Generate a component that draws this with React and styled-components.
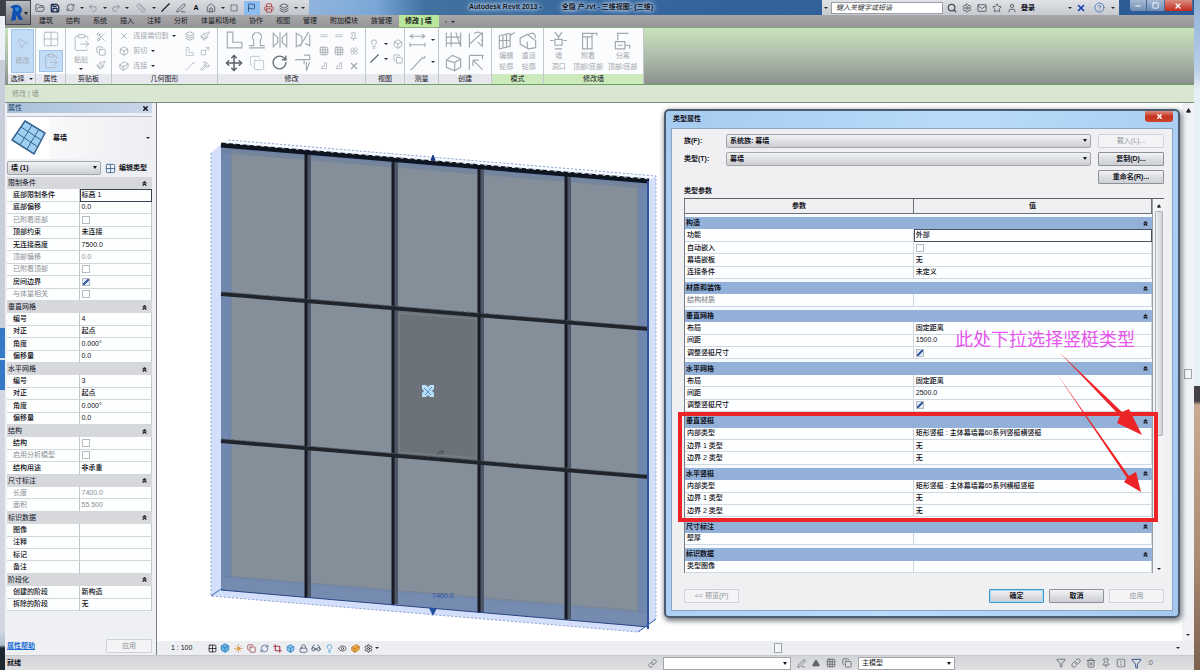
import React, { useState } from "react";
import styled, { createGlobalStyle } from "styled-components";
import {
  FolderOpen, Save, RefreshCw, Undo2, Redo2, Slash, Square, Home, Flag, Printer,
  Search, Star, User, CircleHelp, MousePointer2, Scissors, Copy, Paintbrush,
  ClipboardPaste, Move, RotateCw, Lightbulb, Box, Ruler, Grid2x2, Grid3x3,
  PenLine, Hammer, Pin, Trash2, FlipHorizontal, Sun, Crop, Glasses, Eye, Lock,
  Funnel, Link, Mail, Layers, ChevronsUp, Triangle, Minus, Settings, X, Cuboid,
} from "lucide-react";

const GlobalStyle = createGlobalStyle`
  html {
    font-size: 16px;
  }

  body {
    margin: 0;
    padding: 0;
    background: #d5dae6;
  }

  * {
    box-sizing: border-box;
  }

  body, button, input, select {
    font-family: "Liberation Sans", "Noto Sans CJK SC", sans-serif;
    font-size: 7px;
    line-height: 10px;
    color: #14141c;
  }

  button {
    padding: 0;
    margin: 0;
    border: 0;
    background: none;
  }

  svg {
    display: block;
    flex: none;
  }
`

const Desktop = styled.div`
  display: grid;
  grid-template-columns: 5px minmax(0, 1fr) 6px;
  min-height: 100vh;
`

const LeftEdge = styled.div`
  background: linear-gradient(
    #3e4048 0 16px, #eef2f8 16px 60px, #c9cedb 60px 328px, #3478c8 328px 358px,
    #d6def0 358px 360px, #3478c8 360px 390px, #d2d7e2 390px 630px, #aebfd0 645px, #1c2731 648px
  );
`

const RightEdge = styled.div`
  background: linear-gradient(
    #8fb0d6 0, #b9cfe9 70px, #e6f0f7 90px 386px, #444248 386px 401px, #c8ab92 405px, #a98a72 560px, #7d6250
  );
`

const Window = styled.div`
  display: flex;
  flex-direction: column;
  min-width: 0;
`

const TitleBar = styled.header`
  display: flex;
  height: 15px;
  background: linear-gradient(90deg, #90b5dd 305px, #7aa7d6 370px, #41719f 420px, #34629c 60%, #2c5a94);
`

const AppButton = styled.button`
  position: relative;
  z-index: 2;
  display: flex;
  align-items: center;
  width: 26px;
  height: 25px;
  padding: 2px;
  background: linear-gradient(#b9bcc2, #77797e);
  border: 1px solid #44464c;
`

const QuickAccess = styled.div`
  display: flex;
  align-items: center;
  justify-content: space-between;
  width: 278px;
  padding: 0 4px 0 3px;
  background: linear-gradient(#d9dbe0, #c3c6cc);
  color: #4c505a;
`

const IconButton = styled.button`
  display: flex;
  align-items: center;
  justify-content: center;
  min-width: ${(props) => props.$w || 12}px;
  height: ${(props) => props.$h || 12}px;
  color: ${(props) => props.$color || "inherit"};
  background: ${(props) => (props.$on ? "#8cbcf0" : "transparent")};
`

const Caret = styled.span`
  width: 0;
  height: 0;
  border: 2px solid transparent;
  border-top-color: ${(props) => props.$color || "#26282e"};
  border-bottom-width: 0;
`

const Caption = styled.h1`
  flex: 1;
  display: flex;
  gap: 20px;
  margin: 0;
  padding-left: 160px;
  font-size: 7px;
  line-height: 14px;
  font-weight: 700;
  white-space: nowrap;
  text-shadow: 0 0 3px #cfe2f7, 0 0 5px #b3cfee, 0 0 6px #b3cfee;
`

const InfoBar = styled.div`
  display: flex;
  align-items: center;
  gap: 3px;
  width: 297px;
  padding: 0 4px 0 2px;
  background: linear-gradient(#e0e2e6, #c6c9cf);
  color: #4c505a;
`

const SearchBox = styled.input`
  width: 112px;
  height: 12px;
  padding: 0 4px;
  border: 1px solid #9a9ea6;
  background: #fff;
  &::placeholder {
    color: #333;
    font-style: italic;
  }
`

const Login = styled.button`
  font-weight: 700;
  margin-right: auto;
`

const WindowButtons = styled.div`
  display: flex;
  width: 63px;
  height: 11px;
  margin: 0 1px 0 11px;
  border-radius: 0 0 3px 3px;
  overflow: hidden;
`

const WindowButton = styled.button`
  flex: ${(props) => (props.$close ? 5 : 3)};
  display: flex;
  align-items: center;
  justify-content: center;
  color: #fff;
  background: ${(props) => (props.$close ? "linear-gradient(#d98c80, #c32a1c)" : "linear-gradient(#a5b9d3, #6d8db4)")};
  border-right: 1px solid #4a6890;
`

const Tabs = styled.nav`
  display: flex;
  align-items: flex-end;
  height: 13px;
  padding-left: 28px;
  background: linear-gradient(#a8a8aa, #969698);
  border-bottom: 1px solid #8aa884;
`

const Tab = styled.button`
  height: 12px;
  padding: 0 7px 0 6px;
  font-weight: ${(props) => (props.$active ? 700 : 400)};
  color: #16161a;
  background: ${(props) => (props.$active ? "#b9e59c" : "transparent")};
  white-space: nowrap;
`

const Ribbon = styled.div`
  display: flex;
  height: 57px;
  padding-left: 3px;
  background: linear-gradient(#c9e2bb, #b0c2ae 45%, #8b908c);
  border-bottom: 1px solid #6f9c68;
`

const Panel = styled.section`
  display: flex;
  flex-direction: column;
  width: ${(props) => props.$w}px;
  background: #fbfcfd;
  border-right: 1px solid #c3c6cc;
`

const PanelBody = styled.div`
  flex: 1;
  display: flex;
  align-items: center;
  justify-content: space-around;
  padding: 1px 3px;
  color: #a3a7af;
`

const PanelName = styled.h2`
  display: flex;
  align-items: center;
  justify-content: center;
  gap: 4px;
  height: 10px;
  margin: 0;
  font-size: 7px;
  font-weight: 400;
  background: ${(props) => (props.$green ? "#cdeabd" : "#e6e8ee")};
`

const IconGrid = styled.div`
  display: grid;
  grid-template-columns: repeat(${(props) => props.$cols}, auto);
  gap: ${(props) => props.$gap || 3}px;
  align-items: center;
  justify-items: center;
`

const Tool = styled.button`
  display: flex;
  flex-direction: column;
  align-items: center;
  justify-content: center;
  gap: ${(props) => props.$gap || 1}px;
  min-width: ${(props) => props.$w || 10}px;
  height: ${(props) => props.$h || "auto"};
  color: ${(props) => props.$color || "#a3a7af"};
  background: ${(props) => (props.$on ? "#c2dcf8" : "transparent")};
  border: ${(props) => (props.$on ? "1px solid #9fc4ea" : "0")};
  white-space: nowrap;
`

const ToolRow = styled.div`
  display: flex;
  align-items: center;
  gap: 4px;
  height: 14px;
`

const ToolColumn = styled.div`
  display: flex;
  flex-direction: column;
  gap: 1px;
`

const OptionsBar = styled.div`
  height: 18px;
  padding: 4px 7px;
  background: #d9e6d2;
  border-bottom: 1px solid #7d8a7c;
  color: #8d978b;
`

const Workspace = styled.main`
  flex: 1;
  display: flex;
  position: relative;
`

const Properties = styled.aside`
  display: flex;
  flex-direction: column;
  width: 152px;
  padding: 0 4px 2px 2px;
  background: #eef0f4;
  border-right: 1px solid #777b84;
`

const PaletteTitle = styled.h2`
  display: flex;
  align-items: center;
  justify-content: space-between;
  height: 10px;
  margin: 0;
  padding: 0 3px 0 1px;
  font-size: 7px;
  font-weight: 400;
  color: #23405f;
  background: linear-gradient(90deg, #a9c1da, #c9d7e8);
`

const TypePicker = styled.button`
  display: flex;
  align-items: center;
  gap: 4px;
  height: 43px;
  margin-top: 3px;
  padding-right: 2px;
  background: linear-gradient(90deg, #fdfdfe, #edeef1);
  border-top: 1px solid #b9bdc5;
  font-weight: 700;
`

const Thumb = styled.span`
  padding: 2px 3px;
  background: #fff;
`

const TypeLabel = styled.span`
  flex: 1;
  text-align: left;
`

const FilterRow = styled.div`
  display: flex;
  align-items: center;
  gap: 4px;
  height: 18px;
`

const SelectWrap = styled.div`
  position: relative;
  width: ${(props) => (props.$w ? props.$w + "px" : "auto")};
  &::after {
    content: "";
    position: absolute;
    right: 4px;
    top: 5px;
    border: 2px solid transparent;
    border-top: 3px solid #15161c;
    border-bottom-width: 0;
    pointer-events: none;
  }
`

const Select = styled.select`
  display: block;
  appearance: none;
  width: 100%;
  height: ${(props) => props.$h || 14}px;
  padding: 0 3px;
  font-weight: ${(props) => (props.$plain ? 400 : 700)};
  border: 1px solid #a2a5ac;
  border-radius: ${(props) => (props.$plain ? 0 : 2)}px;
  background: ${(props) => (props.$plain ? "#fff" : "linear-gradient(#f2f3f4, #dfe0e3 50%, #cdced2)")};
`

const EditType = styled.button`
  display: flex;
  align-items: center;
  gap: 3px;
  font-weight: 700;
`

const PropTable = styled.table`
  width: 100%;
  height: 434px;
  border-collapse: separate;
  border-spacing: 0;
  table-layout: fixed;
`

const PropGroup = styled.th`
  height: 12px;
  padding: 0 4px 0 1px;
  text-align: left;
  font-weight: 400;
  background: #d6d8dc;
`

const GroupLine = styled.div`
  display: flex;
  align-items: center;
  justify-content: space-between;
  color: #10131c;
`

const PropCell = styled.td`
  height: 12px;
  padding: 0 1px ${(props) => (props.$name ? "0 6px" : "0 2px")};
  font-weight: ${(props) => (props.$dim ? 400 : 500)};
  color: ${(props) => (props.$dim ? "#8c8f96" : "#0e0e16")};
  background: #fdfefe;
  border-right: 1px solid #c3c6cc;
  border-bottom: 1px solid #d3d6da;
  outline: ${(props) => (props.$focus ? "1px solid #3e4250" : "none")};
  outline-offset: -1px;
`

const Check = styled.input`
  display: block;
  appearance: none;
  width: 8px;
  height: 8px;
  margin: 0;
  border: 1px solid #b5b9c2;
  background: ${(props) => (props.defaultChecked ? "linear-gradient(135deg, #dfe9f7 35%, #3c5f9e 40% 60%, #dfe9f7 65%)" : "#fff")};
`

const ApplyRow = styled.div`
  display: flex;
  align-items: center;
  justify-content: space-between;
  margin-top: auto;
`

const HelpLink = styled.a`
  color: #1f6fd0;
  font-weight: 700;
`

const PushButton = styled.button`
  width: ${(props) => props.$w || 55}px;
  height: 14px;
  border: 1px solid ${(props) => (props.$primary ? "#3f97d0" : props.disabled ? "#cfd2d6" : "#8d9097")};
  border-radius: 1px;
  font-weight: ${(props) => (props.disabled ? 400 : 700)};
  color: ${(props) => (props.disabled ? "#8f9298" : "#14141c")};
  background: ${(props) => (props.disabled ? "#f4f4f6" : "linear-gradient(#f3f4f5, #dcdee2 50%, #cccfd5)")};
  box-shadow: ${(props) => (props.$primary ? "inset 0 0 0 1px #a6dbf5" : "none")};
`

const View = styled.section`
  flex: 1;
  display: flex;
  flex-direction: column;
  min-width: 0;
  background: #fff;
`

const Canvas = styled.div`
  flex: 1;
  display: flex;
  justify-content: space-between;
  padding-left: 48px;
`

const Drawing = styled.div`
  padding-top: 28px;
`

const ViewScroll = styled.div`
  display: flex;
  flex-direction: column;
  align-items: center;
  justify-content: space-between;
  width: 12px;
  padding: 5px 0;
  background: #f0f2f6;
`

const Grip = styled.span`
  width: 8px;
  height: 10px;
  border: 1px solid #9fa3ab;
  background: #f5f6f8;
`

const ViewBar = styled.div`
  display: flex;
  align-items: center;
  gap: 1px;
  height: 14px;
  padding: 0 14px;
  background: #eceef1;
`

const Scale = styled.button`
  width: 34px;
  text-align: left;
`

const ViewTrack = styled.div`
  flex: 1;
  display: flex;
  align-items: center;
  justify-content: center;
`

const StatusBar = styled.footer`
  display: flex;
  align-items: center;
  gap: 6px;
  height: 15px;
  padding: 0 41px 0 2px;
  background: linear-gradient(#d3d5d8, #dfe0e2);
  border-top: 1px solid #c6c8cc;
  color: #62656c;
`

const Ready = styled.span`
  flex: 1;
  font-weight: 700;
  color: #15161c;
`

const StatusRight = styled.div`
  flex: 1;
  display: flex;
  justify-content: flex-end;
  gap: 5px;
  max-width: 192px;
`

// floating window, lies over the drawing area
const Dialog = styled.div`
  position: absolute;
  left: 659px;
  right: 14px;
  top: 6px;
  display: flex;
  flex-direction: column;
  padding: 0 5px 5px;
  background: linear-gradient(100deg, #a7cbf0, #b9dcfb 50%, #a5c9ee);
  border: 2px solid #4a5b70;
  border-radius: 5px;
  box-shadow: 1px 2px 5px 1px rgba(30, 35, 50, 0.6);
`

const DialogTitle = styled.div`
  display: flex;
  justify-content: space-between;
  height: 17px;
  padding: 3px 0 0 2px;
  font-weight: 700;
`

const CloseButton = styled.button`
  display: flex;
  align-items: center;
  justify-content: center;
  width: 28px;
  height: 11px;
  margin-top: -3px;
  color: #fff;
  border-radius: 0 0 3px 3px;
  background: linear-gradient(#df8d7d, #c43420 50%, #d0442c);
`

const DialogBody = styled.div`
  padding: 5px 8px 7px 12px;
  background: #f0f0f3;
  border: 1px solid #8ba6c2;
`

const Form = styled.div`
  display: grid;
  grid-template-columns: 42px minmax(0, 1fr) 66px;
  column-gap: 0;
  row-gap: 4px;
  align-items: center;
  font-weight: 700;
`

const FormButton = styled(PushButton)`
  grid-column: 3;
  justify-self: end;
`

const FieldSelect = styled(SelectWrap)`
  margin-right: 7px;
`

const SubTitle = styled.div`
  margin: 2px 0;
  font-weight: 700;
`

const TableArea = styled.div`
  display: flex;
  border-top: 1px solid #5d6068;
`

const TypeTable = styled.table`
  flex: 1;
  height: 374px;
  border-collapse: separate;
  border-spacing: 0;
  table-layout: fixed;
  border-left: 1px solid #777b84;
  border-right: 1px solid #9a9ea6;
`

const HeadCell = styled.th`
  height: 15px;
  padding: 0;
  font-weight: 700;
  border-right: 1px solid #6c7078;
  border-bottom: 1px solid #6c7078;
`

const TypeGroup = styled.th`
  height: 15px;
  padding: 0 3px 0 1px;
  text-align: left;
  font-weight: 700;
  background: #93b1d8;
  background-clip: padding-box;
  border-top: 3px solid #f6f9fd;
`

const TypeCell = styled.td`
  height: 12px;
  padding: 0 2px;
  font-weight: 500;
  color: ${(props) => (props.$dim ? "#84878e" : "#0e0e16")};
  background: #fdfeff;
  border-right: 1px solid #d0d5dc;
  border-bottom: 1px solid #d0d8e0;
  outline: ${(props) => (props.$focus ? "1px solid #4c505c" : "none")};
  outline-offset: -1px;
`

const Scroll = styled.div`
  display: flex;
  flex-direction: column;
  align-items: center;
  gap: 3px;
  width: 11px;
  padding: 5px 0 3px;
  background: #f2f3f5;
`

const ScrollThumb = styled.div`
  width: 8px;
  height: 225px;
  border: 1px solid #b0b3ba;
  border-radius: 1px;
  background: linear-gradient(90deg, #f0f1f3, #cfd1d6);
`

const ScrollEnd = styled.button`
  margin-top: auto;
`

const Footer = styled.div`
  display: flex;
  gap: 5px;
  margin-top: 16px;
`

const Preview = styled(PushButton)`
  margin-right: auto;
`

const RedBox = styled.div`
  position: absolute;
  left: 12px;
  right: 20px;
  top: 301px;
  height: 110px;
  border: 4px solid #ec2427;
  pointer-events: none;
`

const Arrows = styled.svg`
  position: absolute;
  right: 33px;
  top: 238px;
  pointer-events: none;
`

const Note = styled.div`
  position: absolute;
  right: 43px;
  top: 217px;
  font-family: "Liberation Serif", "Noto Sans CJK SC", sans-serif;
  font-size: 18px;
  line-height: 24px;
  color: #e656ec;
  white-space: nowrap;
`

const tabs = ["建筑", "结构", "系统", "插入", "注释", "分析", "体量和场地", "协作", "视图", "管理", "附加模块", "族管理"]

// value true / false is a tick box, dim rows are read only
const properties = [
  { name: "限制条件", rows: [
    { label: "底部限制条件", value: "标高 1", focus: true },
    { label: "底部偏移", value: "0.0" },
    { label: "已附着底部", value: false, dim: true },
    { label: "顶部约束", value: "未连接" },
    { label: "无连接高度", value: "7500.0" },
    { label: "顶部偏移", value: "0.0", dim: true },
    { label: "已附着顶部", value: false, dim: true },
    { label: "房间边界", value: true },
    { label: "与体量相关", value: false, dim: true },
  ] },
  { name: "垂直网格", rows: [
    { label: "编号", value: "4" },
    { label: "对正", value: "起点" },
    { label: "角度", value: "0.000°" },
    { label: "偏移量", value: "0.0" },
  ] },
  { name: "水平网格", rows: [
    { label: "编号", value: "3" },
    { label: "对正", value: "起点" },
    { label: "角度", value: "0.000°" },
    { label: "偏移量", value: "0.0" },
  ] },
  { name: "结构", rows: [
    { label: "结构", value: false },
    { label: "启用分析模型", value: false, dim: true },
    { label: "结构用途", value: "非承重" },
  ] },
  { name: "尺寸标注", rows: [
    { label: "长度", value: "7400.0", dim: true },
    { label: "面积", value: "55.500", dim: true },
  ] },
  { name: "标识数据", rows: [
    { label: "图像", value: "" },
    { label: "注释", value: "" },
    { label: "标记", value: "" },
    { label: "备注", value: "" },
  ] },
  { name: "阶段化", rows: [
    { label: "创建的阶段", value: "新构造" },
    { label: "拆除的阶段", value: "无" },
  ] },
]

const typeParams = [
  { name: "构造", rows: [
    { label: "功能", value: "外部", focus: true },
    { label: "自动嵌入", value: false },
    { label: "幕墙嵌板", value: "无" },
    { label: "连接条件", value: "未定义" },
  ] },
  { name: "材质和装饰", rows: [{ label: "结构材质", value: "", dim: true }] },
  { name: "垂直网格", rows: [
    { label: "布局", value: "固定距离" },
    { label: "间距", value: "1500.0" },
    { label: "调整竖梃尺寸", value: true },
  ] },
  { name: "水平网格", rows: [
    { label: "布局", value: "固定距离" },
    { label: "间距", value: "2500.0" },
    { label: "调整竖梃尺寸", value: true },
  ] },
  { name: "垂直竖梃", rows: [
    { label: "内部类型", value: "矩形竖梃 : 主体幕墙幕60系列竖梃横竖梃" },
    { label: "边界 1 类型", value: "无" },
    { label: "边界 2 类型", value: "无" },
  ] },
  { name: "水平竖梃", rows: [
    { label: "内部类型", value: "矩形竖梃 : 主体幕墙幕65系列横梃竖梃" },
    { label: "边界 1 类型", value: "无" },
    { label: "边界 2 类型", value: "无" },
  ] },
  { name: "尺寸标注", rows: [{ label: "壁厚", value: "" }] },
  { name: "标识数据", rows: [{ label: "类型图像", value: "" }] },
]

const paths = {
  cope: "M2 1v14h13v-5H7V1z",
  cut: "M1 13h4V8a4 4 0 1 1 6 0v5h4M1 15h14",
  mirror: "M2 2v12l4-4V6zM14 2v12l-4-4V6zM8 1v14",
  mirrorDraw: "M2 2v12l5-3V5zM14 3v10l-4-2M5 14L13 1",
  trim: "M1 5h8v4M9 1h5v4H9M11 7v8M14 7l-3 8",
  offset: "M2 6h12M2 9h12",
  array: "M2 2h5v5H2zM9 2h5v5H9zM2 9h5v5H2zM9 9h5v5H9z",
  scale: "M2 14V7h7v7zM9 2h5v5M14 2L8 8",
  corner: "M3 12h9V3M5 12V8h4V3h3",
  dim: "M1 4h14M4 2L1 4l3 2M12 2l3 2-3 2M1 12h14M1 10v4M15 10v4",
  measure: "M3 14L13 3M13 3a1 1 0 1 0 1-1M3 14l-2 1",
  group: "M2 2v12M6 2v12M2 6h12M2 11h12M10 2l4 12M14 2v12",
  sheet: "M2 3v12M2 12L13 2M6 3a4 4 0 0 1 6 6M13 2v12M9 10l4 4",
  assembly: "M2 6l5-4 7 3v7l-5 3-7-3zM2 6l7 2 5-3M9 8v7",
  similar: "M2 2h12M2 2v12M5 6l8 8M5 6v5M5 6h5M13 2v3",
  profile: "M2 4l9-2v11l-9 2zM5 4v10M8 3v10M11 4l4-3M2 8h9",
  reset: "M1 6l6-3 7 5v6l-6 1-7-4zM8 3c4-3 6 0 6 3M7 9v6",
  opening: "M5 1l3 4 3-4M8 5v2M5 7h6v5H5zM1 8h3M12 8h3M5 15h6",
  attach: "M3 2h8v13H3zM3 5h8M11 2h4v2M7 5v10",
  detach: "M4 8V2h9M2 9h8v6H2zM10 12h4v3M4 12h4",
}

function Glyph({ name, size = 18, width = 1 }) {
  return (
    <svg width={size} height={size} viewBox="0 0 16 16" fill="none" stroke="currentColor" strokeWidth={width}>
      <path d={paths[name]} />
    </svg>
  )
}

function Logo() {
  return (
    <svg width="20" height="20" viewBox="0 0 20 20">
      <path d="M2 4Q8 0 12 3Q16 7 12 11L15 17L11 17L8 12L8 17L3 18L5 6Z" fill="#0f4fae" />
      <path d="M7 5Q12 3 11 7L8 9Z" fill="#3c84d4" />
      <path d="M16 9h4l-2 3z" fill="#222" />
    </svg>
  )
}

function CurtainIcon() {
  return (
    <svg width="36" height="38" viewBox="0 0 36 38" stroke="#35638f">
      <path d="M15 2L35 14L24 35L2 21Z" fill="#9fd0f2" strokeWidth="1.5" />
      <path d="M22 6L10 26M29 10L17 30M11 8L31 21M7 14L28 28" fill="none" strokeWidth="1" />
    </svg>
  )
}

function WallDrawing() {
  const mullions = [305, 392, 478, 565]
  // the wall drops 36px over its 428px width
  const drop = (x) => Math.round(((x - 221) * 36) / 428)
  return (
    <svg width="460" height="506" viewBox="205 130 460 506">
      <path d="M211 152L221 143L229 139L656 175V619L638 631L211 595Z" fill="#d3dffb" />
      <path d="M229 139L656 175L649 179L221 143Z" fill="#f6f9ff" />
      <path d="M211 152V595L638 631L656 618V175L229 139V146" fill="none" stroke="#8fa2cf" strokeDasharray="2 2" />
      <path d="M221 143L649 180V626L221 589Z" fill="#7088b0" />
      <path d="M231 149L638 183V611L231 576Z" fill="#848f9a" />
      <path d="M221 147L649 183V188L221 152Z" fill="#6b7f9f" opacity="0.6" />
      <path d="M221 577L649 613V626L221 589Z" fill="#768bb0" />
      <path d="M231 156V575M638 190V610M225 575L642 610" fill="none" stroke="#647899" strokeDasharray="1 1" />
      <path d="M396 308L480 315V461L396 454Z" fill="#6b727a" />
      <path d="M399 312L477 318V457L399 451Z" fill="none" stroke="#7d848c" />
      <path d="M437 454l3-4 4 1-4 2" fill="none" stroke="#4a5058" />
      {mullions.map((x) => (
        <g key={x}>
          <path d={`M${x + 4} ${145 + drop(x)}v444`} stroke="#4d5667" strokeWidth="4" />
          <path d={`M${x + 1} ${145 + drop(x)}v445`} stroke="#161a22" strokeWidth="3" />
        </g>
      ))}
      <path d="M221 144L649 180" stroke="#0f1421" strokeWidth="5" />
      <path d="M226 142L649 178" stroke="#e5ebf8" strokeDasharray="3 4" />
      <path d="M221 293L649 328M221 440L649 476" stroke="#20242b" strokeWidth="4" />
      <path d="M222 291L649 326M222 438L649 474" stroke="#4e555d" strokeDasharray="3 2" />
      <path d="M221 589L649 626" stroke="#2c4680" />
      <path d="M648 180V628" stroke="#32549c" strokeWidth="2" />
      <path d="M211 595l10-7 5 1M638 631l18-13" fill="none" stroke="#3f66b8" />
      <path d="M431 159l2-5 2 5z" fill="#183b86" stroke="#183b86" />
      <path d="M429 607h8l-4 8z" fill="#2450a0" />
      <path d="M422 384h4l2 2 2-2h4v4l-2 2 2 2v4h-4l-2-2-2 2h-4v-4l2-2-2-2z" fill="#b9e0fb" />
      <path d="M424 387l7 7M432 386l-7 8" stroke="#4d86b8" />
      <text x="432" y="597" fontSize="7" fill="#2e539c">7400.0</text>
    </svg>
  )
}

const toValue = (row) =>
  typeof row.value === "boolean" ? (
    <Check type="checkbox" aria-label={row.label} defaultChecked={row.value} disabled={row.dim} />
  ) : row.value

const GroupHead = ({ name, open, onToggle }) => (
  <GroupLine>
    {name}
    <button type="button" aria-label={`折叠 ${name}`} aria-expanded={open} onClick={onToggle}>
      <ChevronsUp size={7} strokeWidth={4} />
    </button>
  </GroupLine>
)

const App = () => {
  const [closed, setClosed] = useState([])
  const [active, setActive] = useState("修改 | 墙")

  const toggle = (key) =>
    setClosed(closed.includes(key) ? closed.filter((k) => k !== key) : [...closed, key])

  return (
    <>
      <GlobalStyle />
      <Desktop>
        <LeftEdge />
        <Window>
          <TitleBar>
            <AppButton aria-label="应用程序菜单"><Logo /></AppButton>
            <QuickAccess>
              <IconButton aria-label="打开"><FolderOpen size={10} /></IconButton>
              <IconButton aria-label="保存" $color="#1e2c50"><Save size={10} strokeWidth={3} /></IconButton>
              <IconButton aria-label="同步"><RefreshCw size={9} /></IconButton>
              <Caret />
              <IconButton aria-label="放弃" $color="#8b8f98"><Undo2 size={10} /></IconButton>
              <Caret />
              <IconButton aria-label="重做" $color="#8b8f98"><Redo2 size={10} /></IconButton>
              <Caret />
              <IconButton aria-label="测量" $w={16} $color="#8b8f98"><Ruler size={10} /></IconButton>
              <Caret />
              <IconButton aria-label="对齐" $color="#15161c"><Slash size={9} strokeWidth={3} /></IconButton>
              <IconButton aria-label="标记"><PenLine size={10} /></IconButton>
              <IconButton aria-label="文字" $color="#08080c"><b>A</b></IconButton>
              <IconButton aria-label="三维视图"><Home size={10} /></IconButton>
              <Caret />
              <IconButton aria-label="剖面"><Square size={8} /></IconButton>
              <IconButton aria-label="细线" $on $w={16} $h={14} $color="#1f3b70"><Flag size={9} /></IconButton>
              <IconButton aria-label="关闭窗口" $color="#b03a3a"><Printer size={10} /></IconButton>
              <IconButton aria-label="切换窗口"><Layers size={10} /></IconButton>
              <Caret />
              <Caret />
            </QuickAccess>
            <Caption>
              <span>Autodesk Revit 2013 -</span>
              <span>全隐 产.rvt - 三维视图: {"{三维}"}</span>
            </Caption>
            <InfoBar>
              <Caret />
              <SearchBox aria-label="搜索" placeholder="键入关键字或短语" />
              <IconButton aria-label="搜索"><Search size={10} strokeWidth={3} /></IconButton>
              <IconButton aria-label="速博"><Settings size={10} /></IconButton>
              <IconButton aria-label="通讯中心"><Mail size={10} /></IconButton>
              <IconButton aria-label="收藏夹"><Star size={10} /></IconButton>
              <IconButton aria-label="用户"><User size={10} /></IconButton>
              <Login>登录</Login>
              <Caret />
              <IconButton aria-label="Exchange" $color="#1c3fae"><X size={10} strokeWidth={4} /></IconButton>
              <IconButton aria-label="帮助" $w={18} $color="#4a7ab8"><CircleHelp size={11} /></IconButton>
              <Caret />
            </InfoBar>
            <WindowButtons>
              <WindowButton aria-label="最小化"><Minus size={8} strokeWidth={3} /></WindowButton>
              <WindowButton aria-label="最大化"><Square size={7} strokeWidth={3} /></WindowButton>
              <WindowButton aria-label="关闭" $close><X size={8} strokeWidth={4} /></WindowButton>
            </WindowButtons>
          </TitleBar>

          <Tabs>
            {[...tabs, "修改 | 墙"].map((name) => (
              <Tab key={name} $active={name === active} onClick={() => setActive(name)}>{name}</Tab>
            ))}
            <Tab aria-label="显示选项"><ToolRow>▫ <Caret /></ToolRow></Tab>
          </Tabs>

          <Ribbon>
            <Panel $w={28}>
              <PanelBody>
                <Tool $on $w={23} $h="44px" $gap={6}><MousePointer2 size={13} strokeWidth={1} />修改</Tool>
              </PanelBody>
              <PanelName>选择 <Caret /></PanelName>
            </Panel>
            <Panel $w={30}>
              <PanelBody>
                <IconGrid $cols={1} $gap={2}>
                  <Tool aria-label="类型属性"><Grid2x2 size={18} strokeWidth={1} /></Tool>
                  <Tool aria-label="属性" $on $w={24} $h="22px"><ClipboardPaste size={16} strokeWidth={1} /></Tool>
                </IconGrid>
              </PanelBody>
              <PanelName>属性</PanelName>
            </Panel>
            <Panel $w={46}>
              <PanelBody>
                <Tool $gap={3}><ClipboardPaste size={19} strokeWidth={1} />粘贴<Caret /></Tool>
                <IconGrid $cols={1} $gap={4}>
                  <Tool aria-label="剪切"><Scissors size={10} /></Tool>
                  <Tool aria-label="复制"><Copy size={10} /></Tool>
                  <Tool aria-label="匹配"><Paintbrush size={10} /></Tool>
                </IconGrid>
              </PanelBody>
              <PanelName>剪贴板</PanelName>
            </Panel>
            <Panel $w={106}>
              <PanelBody>
                <ToolColumn>
                  <ToolRow><X size={10} />连接端切割<Caret /></ToolRow>
                  <ToolRow><Box size={10} />剪切<Caret /></ToolRow>
                  <ToolRow><Cuboid size={10} />连接<Caret /></ToolRow>
                </ToolColumn>
                <IconGrid $cols={2} $gap={5}>
                  <Tool aria-label="拆分面"><Layers size={10} /></Tool>
                  <Tool aria-label="填色"><Paintbrush size={10} /></Tool>
                  <Tool aria-label="墙连接"><Glyph name="cope" size={9} /></Tool>
                  <Tool aria-label="梁柱连接"><Glyph name="scale" size={10} /></Tool>
                  <Tool aria-label="屋顶连接"><Glyph name="measure" size={10} /></Tool>
                  <Tool aria-label="拆除"><Hammer size={10} /></Tool>
                </IconGrid>
              </PanelBody>
              <PanelName>几何图形</PanelName>
            </Panel>
            <Panel $w={148}>
              <PanelBody>
                <IconGrid $cols={4} $gap={5}>
                  <Tool aria-label="对齐"><Glyph name="cope" /></Tool>
                  <Tool aria-label="偏移"><Glyph name="cut" /></Tool>
                  <Tool aria-label="镜像拾取轴"><Glyph name="mirror" /></Tool>
                  <Tool aria-label="镜像绘制轴"><Glyph name="mirrorDraw" /></Tool>
                  <Tool aria-label="移动" $color="#5b606b"><Move size={18} strokeWidth={2} /></Tool>
                  <Tool aria-label="复制图元"><Copy size={16} strokeWidth={1} /></Tool>
                  <Tool aria-label="旋转" $color="#686d78"><RotateCw size={17} strokeWidth={2} /></Tool>
                  <Tool aria-label="修剪延伸"><Glyph name="trim" /></Tool>
                </IconGrid>
                <IconGrid $cols={3} $gap={5}>
                  <Tool aria-label="拆分"><Glyph name="offset" size={10} /></Tool>
                  <Tool aria-label="间隙拆分"><Glyph name="offset" size={10} /></Tool>
                  <Tool aria-label="锁定"><Pin size={9} /></Tool>
                  <Tool aria-label="阵列"><Grid3x3 size={10} /></Tool>
                  <Tool aria-label="缩放"><Grid3x3 size={10} /></Tool>
                  <Tool aria-label="解锁"><Glyph name="array" size={8} /></Tool>
                  <Tool aria-label="修剪单个"><Glyph name="corner" size={10} /></Tool>
                  <Tool aria-label="修剪多个"><Glyph name="corner" size={10} /></Tool>
                  <Tool aria-label="删除"><X size={10} strokeWidth={3} /></Tool>
                </IconGrid>
              </PanelBody>
              <PanelName>修改</PanelName>
            </Panel>
            <Panel $w={39}>
              <PanelBody>
                <IconGrid $cols={3} $gap={5}>
                  <Lightbulb size={10} /><Caret /><Box size={10} />
                  <Slash size={9} strokeWidth={3} color="#5b606b" /><Caret /><Copy size={10} />
                </IconGrid>
              </PanelBody>
              <PanelName>视图</PanelName>
            </Panel>
            <Panel $w={34}>
              <PanelBody>
                <IconGrid $cols={2} $gap={5}>
                  <Glyph name="dim" size={17} /><Caret />
                  <Glyph name="measure" size={17} /><Caret />
                </IconGrid>
              </PanelBody>
              <PanelName>测量</PanelName>
            </Panel>
            <Panel $w={53}>
              <PanelBody>
                <IconGrid $cols={2} $gap={4}>
                  <Glyph name="group" size={19} />
                  <Glyph name="sheet" size={19} />
                  <Glyph name="assembly" size={19} />
                  <Glyph name="similar" size={19} />
                </IconGrid>
              </PanelBody>
              <PanelName>创建</PanelName>
            </Panel>
            <Panel $w={52}>
              <PanelBody>
                <Tool><Glyph name="profile" size={19} /><span>编辑</span><span>轮廓</span></Tool>
                <Tool><Glyph name="reset" size={19} /><span>重设</span><span>轮廓</span></Tool>
              </PanelBody>
              <PanelName $green>模式</PanelName>
            </Panel>
            <Panel $w={100}>
              <PanelBody>
                <Tool><Glyph name="opening" size={19} /><span>墙</span><span>洞口</span></Tool>
                <Tool><Glyph name="attach" size={19} /><span>附着</span><span>顶部/底部</span></Tool>
                <Tool><Glyph name="detach" size={19} /><span>分离</span><span>顶部/底部</span></Tool>
              </PanelBody>
              <PanelName $green>修改墙</PanelName>
            </Panel>
          </Ribbon>

          <OptionsBar>修改 | 墙</OptionsBar>

          <Workspace>
            <Properties>
              <PaletteTitle>属性 <X size={7} strokeWidth={5} color="#14141c" /></PaletteTitle>
              <TypePicker>
                <Thumb><CurtainIcon /></Thumb>
                <TypeLabel>幕墙</TypeLabel>
                <Caret />
              </TypePicker>
              <FilterRow>
                <SelectWrap $w={94}>
                  <Select aria-label="图元"><option>墙 (1)</option></Select>
                </SelectWrap>
                <EditType><Grid2x2 size={11} color="#466c96" />编辑类型</EditType>
              </FilterRow>
              <PropTable>
                <colgroup><col width="50%" /><col width="50%" /></colgroup>
                {properties.map((group) => (
                  <tbody key={group.name}>
                    <tr>
                      <PropGroup colSpan={2}>
                        <GroupHead name={group.name} open={!closed.includes("p" + group.name)} onToggle={() => toggle("p" + group.name)} />
                      </PropGroup>
                    </tr>
                    {!closed.includes("p" + group.name) && group.rows.map((row) => (
                      <tr key={row.label}>
                        <PropCell $name $dim={row.dim}>{row.label}</PropCell>
                        <PropCell $dim={row.dim} $focus={row.focus}>{toValue(row)}</PropCell>
                      </tr>
                    ))}
                  </tbody>
                ))}
              </PropTable>
              <ApplyRow>
                <HelpLink href="#help">属性帮助</HelpLink>
                <PushButton $w={46} disabled>应用</PushButton>
              </ApplyRow>
            </Properties>

            <View>
              <Canvas>
                <Drawing><WallDrawing /></Drawing>
                <ViewScroll><Triangle size={5} fill="#222" /><Grip /><Caret /></ViewScroll>
              </Canvas>
              <ViewBar>
                <Scale>1 : 100</Scale>
                <IconButton aria-label="详细程度"><Grid2x2 size={9} /></IconButton>
                <IconButton aria-label="视觉样式" $color="#2a80bd"><Box size={10} fill="#6ab4e4" /></IconButton>
                <IconButton aria-label="日光" $color="#d0852a"><Sun size={9} fill="#e8b040" /></IconButton>
                <IconButton aria-label="阴影" $color="#a03a46"><Copy size={9} /></IconButton>
                <IconButton aria-label="渲染" $color="#41628f"><RefreshCw size={9} /></IconButton>
                <IconButton aria-label="裁剪" $color="#a03a46"><Crop size={9} strokeWidth={3} /></IconButton>
                <IconButton aria-label="裁剪区域" $color="#2a80bd"><Box size={9} fill="#8cc4e8" /></IconButton>
                <IconButton aria-label="锁定三维视图" $color="#41526f"><Lock size={9} /></IconButton>
                <IconButton aria-label="临时隐藏" $color="#41526f"><Glasses size={10} /></IconButton>
                <IconButton aria-label="显示隐藏" $color="#3f97d0"><Lightbulb size={9} /></IconButton>
                <IconButton aria-label="临时视图" $color="#40344a"><Eye size={9} /></IconButton>
                <IconButton aria-label="分析模型" $color="#c46b2c"><Cuboid size={9} fill="#e8b040" /></IconButton>
                <IconButton aria-label="约束"><Settings size={9} /></IconButton>
                <Caret />
                <ViewTrack><Grip /></ViewTrack>
                <Caret />
              </ViewBar>
            </View>

            <Dialog role="dialog" aria-label="类型属性">
              <DialogTitle>
                类型属性
                <CloseButton aria-label="关闭对话框"><X size={7} strokeWidth={5} /></CloseButton>
              </DialogTitle>
              <DialogBody>
                <Form>
                  <label htmlFor="family">族(F):</label>
                  <FieldSelect><Select id="family"><option>系统族: 幕墙</option></Select></FieldSelect>
                  <FormButton $w={66} disabled>载入(L)...</FormButton>
                  <label htmlFor="type">类型(T):</label>
                  <FieldSelect><Select id="type"><option>幕墙</option></Select></FieldSelect>
                  <FormButton $w={66}>复制(D)...</FormButton>
                  <FormButton $w={66}>重命名(R)...</FormButton>
                </Form>
                <SubTitle>类型参数</SubTitle>
                <TableArea>
                  <TypeTable>
                    <colgroup><col width="49%" /><col width="51%" /></colgroup>
                    <thead>
                      <tr><HeadCell>参数</HeadCell><HeadCell>值</HeadCell></tr>
                    </thead>
                    {typeParams.map((group) => (
                      <tbody key={group.name}>
                        <tr>
                          <TypeGroup colSpan={2}>
                            <GroupHead name={group.name} open={!closed.includes("t" + group.name)} onToggle={() => toggle("t" + group.name)} />
                          </TypeGroup>
                        </tr>
                        {!closed.includes("t" + group.name) && group.rows.map((row) => (
                          <tr key={row.label}>
                            <TypeCell $dim={row.dim}>{row.label}</TypeCell>
                            <TypeCell $dim={row.dim} $focus={row.focus}>{toValue(row)}</TypeCell>
                          </tr>
                        ))}
                      </tbody>
                    ))}
                  </TypeTable>
                  <Scroll>
                    <button type="button" aria-label="向上滚动"><Triangle size={4} fill="#222" /></button>
                    <ScrollThumb />
                    <ScrollEnd aria-label="向下滚动"><Caret as="div" /></ScrollEnd>
                  </Scroll>
                </TableArea>
                <Footer>
                  <Preview disabled>&lt;&lt; 预览(P)</Preview>
                  <PushButton $primary>确定</PushButton>
                  <PushButton>取消</PushButton>
                  <PushButton disabled>应用</PushButton>
                </Footer>
              </DialogBody>
              <RedBox />
              <Arrows width="92" height="146" viewBox="1054 348 92 146" fill="#ec2427">
                <path d="M1060 351L1123 411L1130 408L1143 434L1118 422L1121 415Z" />
                <path d="M1058 373L1130 475L1137 471L1142 491L1125 481L1128 477Z" />
              </Arrows>
              <Note>此处下拉选择竖梃类型</Note>
            </Dialog>
          </Workspace>

          <StatusBar>
            <Ready>就绪</Ready>
            <Link size={9} />
            <SelectWrap $w={128}>
              <Select $plain $h={13} aria-label="工作集"><option></option></Select>
            </SelectWrap>
            <PenLine size={9} />
            <Triangle size={8} fill="#62656c" />
            <Grid3x3 size={10} />
            <Copy size={10} />
            <SelectWrap $w={97}>
              <Select $plain $h={13} aria-label="设计选项"><option>主模型</option></Select>
            </SelectWrap>
            <StatusRight>
              <Funnel size={10} />
              <Link size={10} />
              <Trash2 size={10} />
              <Pin size={10} />
              <FlipHorizontal size={10} />
              <Funnel size={11} color="#2c4a86" />
              <span>:0</span>
            </StatusRight>
          </StatusBar>
        </Window>
        <RightEdge />
      </Desktop>
    </>
  )
}

export default App;
